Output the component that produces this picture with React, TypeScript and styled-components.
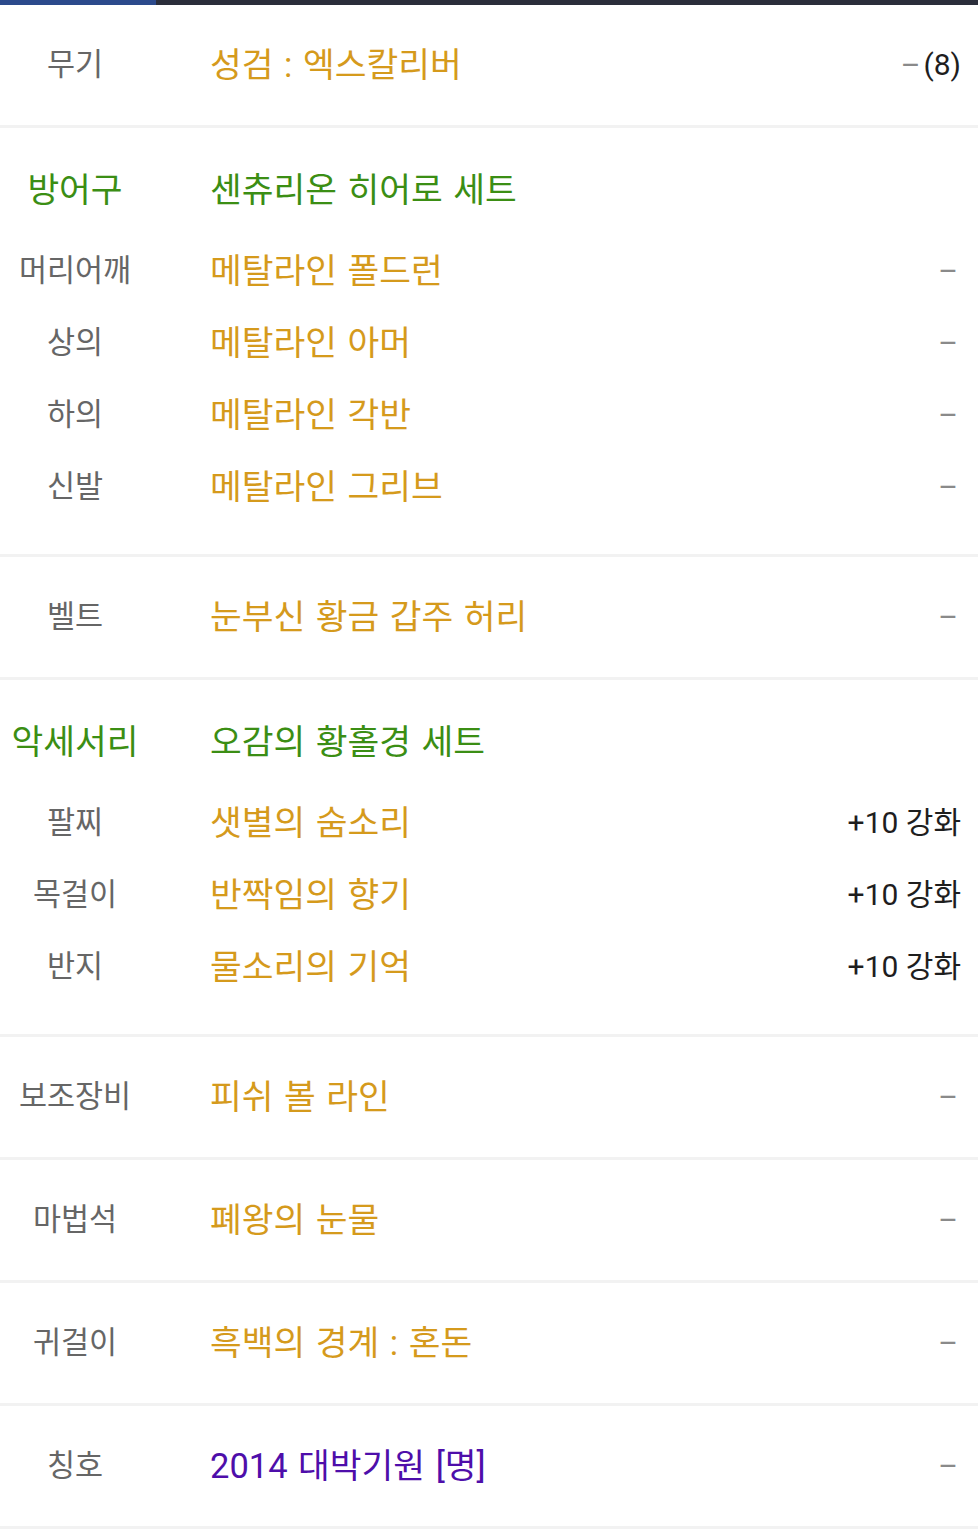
import styled, { createGlobalStyle } from "styled-components";

type Tone = "gold" | "green" | "purple";

interface Item {
  slot: string;
  name: string;
  tone?: Tone;
  extra?: "dash" | "count" | "enhance";
}

interface Section {
  title?: { slot: string; name: string };
  items: Item[];
}

const COLORS: Record<Tone, string> = {
  gold: "#d59a1c",
  green: "#3b8e14",
  purple: "#4e0eaa",
};

const sections: Section[] = [
  { items: [{ slot: "무기", name: "성검 : 엑스칼리버", extra: "count" }] },
  {
    title: { slot: "방어구", name: "센츄리온 히어로 세트" },
    items: [
      { slot: "머리어깨", name: "메탈라인 폴드런", extra: "dash" },
      { slot: "상의", name: "메탈라인 아머", extra: "dash" },
      { slot: "하의", name: "메탈라인 각반", extra: "dash" },
      { slot: "신발", name: "메탈라인 그리브", extra: "dash" },
    ],
  },
  { items: [{ slot: "벨트", name: "눈부신 황금 갑주 허리", extra: "dash" }] },
  {
    title: { slot: "악세서리", name: "오감의 황홀경 세트" },
    items: [
      { slot: "팔찌", name: "샛별의 숨소리", extra: "enhance" },
      { slot: "목걸이", name: "반짝임의 향기", extra: "enhance" },
      { slot: "반지", name: "물소리의 기억", extra: "enhance" },
    ],
  },
  { items: [{ slot: "보조장비", name: "피쉬 볼 라인", extra: "dash" }] },
  { items: [{ slot: "마법석", name: "폐왕의 눈물", extra: "dash" }] },
  { items: [{ slot: "귀걸이", name: "흑백의 경계 : 혼돈", extra: "dash" }] },
  { items: [{ slot: "칭호", name: "2014 대박기원 [명]", tone: "purple", extra: "dash" }] },
];

const GlobalStyle = createGlobalStyle`
  html, body {
    margin: 0;
    padding: 0;
    background: #ffffff;
  }
  body {
    font-family: Roboto, "Noto Sans CJK KR", "Noto Sans", sans-serif;
  }
`;

export default function App() {
  return (
    <>
      <GlobalStyle />
      <Page>
        <TopBar>
          <TopBarActive />
        </TopBar>
        {sections.map((section, i) => (
          <Block key={i} $grouped={!!section.title}>
            {section.title && (
              <TitleRow>
                <GroupLabel>{section.title.slot}</GroupLabel>
                <Name $color={COLORS.green}>{section.title.name}</Name>
              </TitleRow>
            )}
            {section.items.map((item) => (
              <Row key={item.slot} $grouped={!!section.title}>
                <Label>{item.slot}</Label>
                <Name $color={COLORS[item.tone ?? "gold"]}>{item.name}</Name>
                <Extra>
                  {item.extra === "dash" && <Dash>–</Dash>}
                  {item.extra === "count" && (
                    <>
                      <Dash>–</Dash>(8)
                    </>
                  )}
                  {item.extra === "enhance" && "+10 강화"}
                </Extra>
              </Row>
            ))}
          </Block>
        ))}
      </Page>
    </>
  );
}

const Page = styled.div`
  width: 978px;
  display: flex;
  flex-direction: column;
`;

const TopBar = styled.div`
  height: 5px;
  background: #2b2e3b;
  display: flex;
`;

const TopBarActive = styled.div`
  width: 156px;
  background: #2c4a8c;
`;

const Block = styled.section<{ $grouped?: boolean }>`
  display: flex;
  flex-direction: column;
  padding: ${(p) => (p.$grouped ? "26px 0 31px" : "0")};
  border-bottom: 3px solid #f2f2f2;
`;

const TitleRow = styled.div`
  height: 72px;
  margin-bottom: 9px;
  display: flex;
  align-items: center;
`;

const Row = styled.div<{ $grouped?: boolean }>`
  height: ${(p) => (p.$grouped ? "72px" : "120px")};
  display: flex;
  align-items: center;
  padding-right: 17px;
`;

const Label = styled.div`
  width: 150px;
  flex-shrink: 0;
  text-align: center;
  font-size: 30.5px;
  color: #666666;
  line-height: 40px;
  margin-top: -1px;
`;

const GroupLabel = styled(Label)`
  font-size: 34.5px;
  color: #3b8e14;
`;

const Name = styled.div<{ $color: string }>`
  margin-left: 60px;
  flex: 1;
  font-size: 34.5px;
  word-spacing: 2px;
  line-height: 44px;
  margin-top: -1px;
  color: ${(p) => p.$color};
  white-space: nowrap;
`;

const Extra = styled.div`
  font-size: 30px;
  color: #1e1e1e;
  line-height: 40px;
  margin-top: -1px;
  white-space: nowrap;
`;

const Dash = styled.span`
  color: #8a8a8a;
  margin-right: 3px;
`;
